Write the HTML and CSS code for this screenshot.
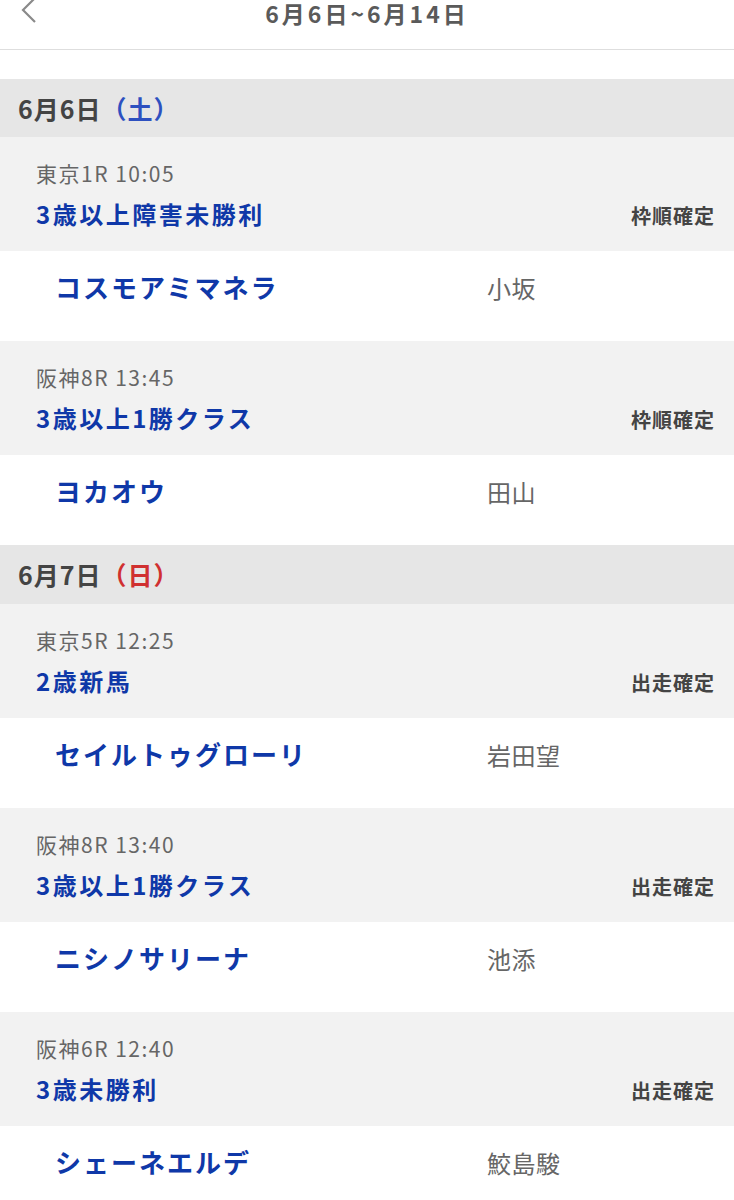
FILE: index.html
```html
<!DOCTYPE html>
<html lang="ja">
<head>
<meta charset="UTF-8">
<meta name="viewport" content="width=device-width, initial-scale=1.0">
<title>出走予定</title>
<link rel="stylesheet" href="styles.css">
</head>
<body>

<div class="topbar">
    <svg class="back" width="20" height="30" viewBox="0 0 20 30">
        <polyline points="14,-2 2,10 14,22" fill="none" stroke="#8a8a8a" stroke-width="2.2"/>
    </svg>
    <div class="topbar-title">6月6日~6月14日</div>
</div>

<div class="list">
    <div class="day">6月6日<span class="sat">（土）</span></div>

    <div class="race">
        <div class="venue">東京1R 10:05</div>
        <div class="race-row">
            <span class="race-name">3歳以上障害未勝利</span>
            <span class="status">枠順確定</span>
        </div>
    </div>
    <div class="horse">
        <span class="horse-name">コスモアミマネラ</span>
        <span class="jockey">小坂</span>
    </div>

    <div class="race">
        <div class="venue">阪神8R 13:45</div>
        <div class="race-row">
            <span class="race-name">3歳以上1勝クラス</span>
            <span class="status">枠順確定</span>
        </div>
    </div>
    <div class="horse">
        <span class="horse-name">ヨカオウ</span>
        <span class="jockey">田山</span>
    </div>

    <div class="day">6月7日<span class="sun">（日）</span></div>

    <div class="race">
        <div class="venue">東京5R 12:25</div>
        <div class="race-row">
            <span class="race-name">2歳新馬</span>
            <span class="status">出走確定</span>
        </div>
    </div>
    <div class="horse">
        <span class="horse-name">セイルトゥグローリ</span>
        <span class="jockey">岩田望</span>
    </div>

    <div class="race">
        <div class="venue">阪神8R 13:40</div>
        <div class="race-row">
            <span class="race-name">3歳以上1勝クラス</span>
            <span class="status">出走確定</span>
        </div>
    </div>
    <div class="horse">
        <span class="horse-name">ニシノサリーナ</span>
        <span class="jockey">池添</span>
    </div>

    <div class="race">
        <div class="venue">阪神6R 12:40</div>
        <div class="race-row">
            <span class="race-name">3歳未勝利</span>
            <span class="status">出走確定</span>
        </div>
    </div>
    <div class="horse">
        <span class="horse-name">シェーネエルデ</span>
        <span class="jockey">鮫島駿</span>
    </div>
</div>

</body>
</html>
```

FILE: styles.css
```css
body {
    margin: 0;
    padding: 0;
    background-color: #fff;
    font-family: "Noto Sans CJK JP", "Noto Sans", sans-serif;
    overflow: hidden;
}

.topbar {
    position: relative;
    height: 49px;
    border-bottom: 1px solid #dedede;
}

.back {
    position: absolute;
    left: 21px;
    top: 0;
}

.topbar-title {
    padding-top: 1px;
    text-align: center;
    font-size: 23px;
    font-weight: bold;
    line-height: 24px;
    letter-spacing: 3px;
    color: #5a5a5a;
}

.list {
    margin-top: 29px;
}

.day {
    height: 58px;
    line-height: 58px;
    padding-left: 18px;
    background-color: #e6e6e6;
    font-size: 25px;
    font-weight: bold;
    letter-spacing: 1px;
    color: #444;
}

.day:nth-of-type(n+2) {
    height: 59px;
}

.sat {
    color: #2d50c0;
}

.sun {
    color: #d03030;
}

.race {
    box-sizing: border-box;
    height: 114px;
    padding: 21px 19px 0 36px;
    background-color: #f2f2f2;
}

.venue {
    font-size: 21px;
    line-height: 30px;
    letter-spacing: 1.5px;
    color: #666;
}

.race-row {
    display: flex;
    justify-content: space-between;
    align-items: baseline;
    margin-top: 10px;
    line-height: 32px;
}

.race-name {
    font-size: 24px;
    font-weight: bold;
    letter-spacing: 2.5px;
    color: #0f38a8;
}

.status {
    font-size: 20px;
    font-weight: bold;
    letter-spacing: 1px;
    color: #444;
}

.horse {
    box-sizing: border-box;
    height: 90px;
    padding: 18px 0 0 55px;
    display: grid;
    grid-template-columns: 432px 1fr;
    align-items: baseline;
    line-height: 36px;
}

.horse-name {
    font-size: 26px;
    font-weight: bold;
    letter-spacing: 2px;
    color: #0f38a8;
}

.jockey {
    font-size: 24px;
    letter-spacing: 0.5px;
    color: #666;
}
```
